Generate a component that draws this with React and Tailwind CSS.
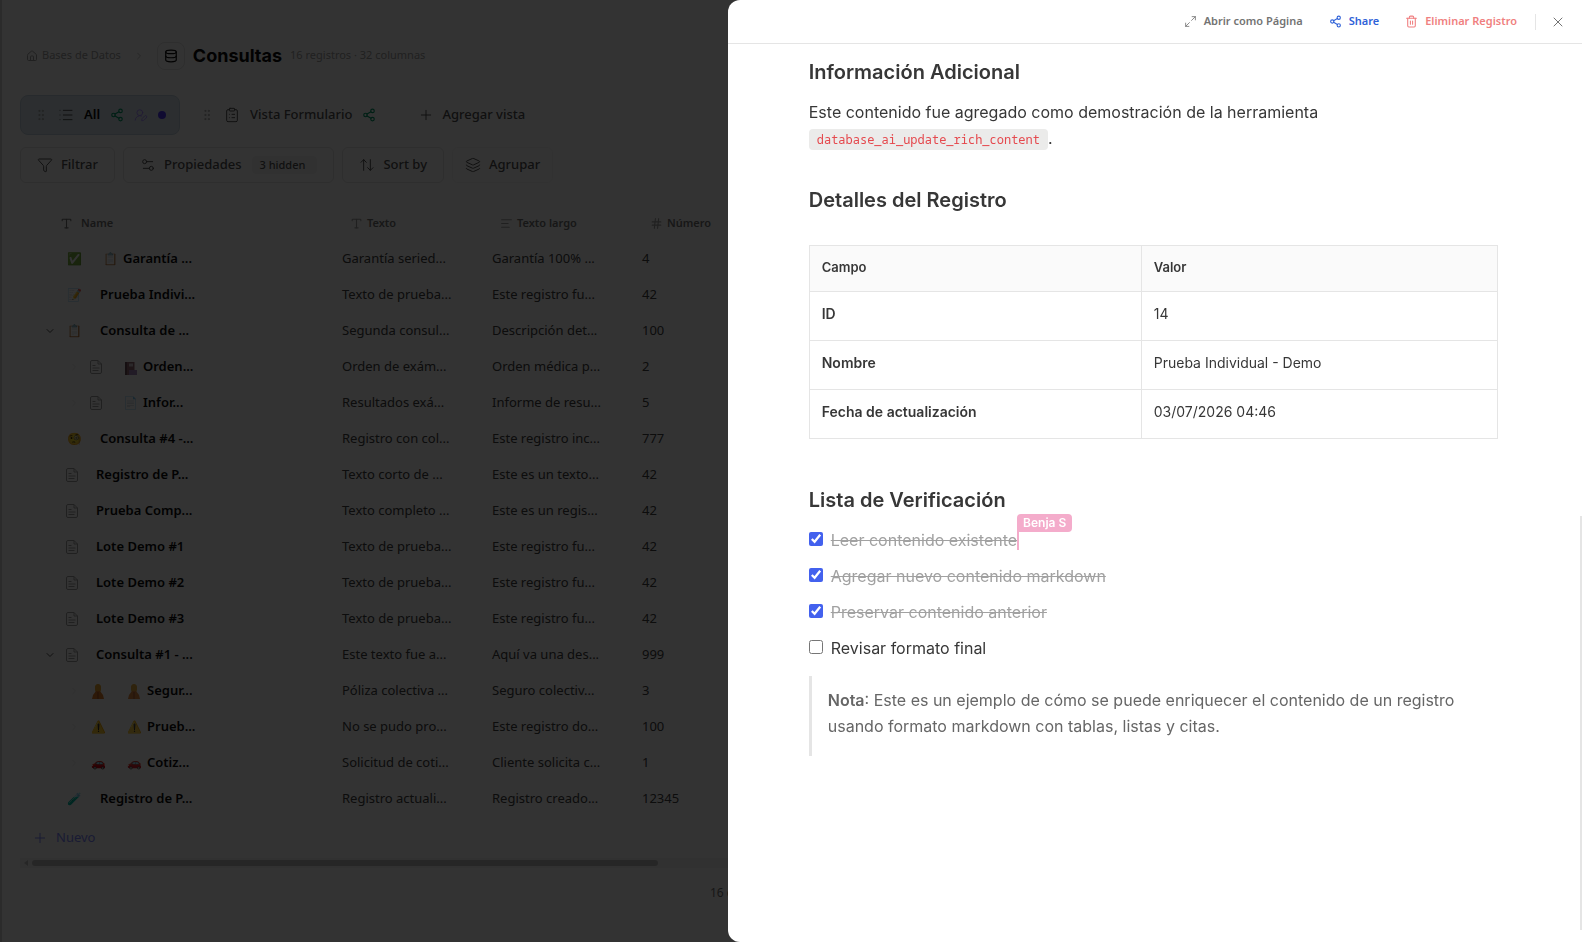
import {
  ArrowUpDown,
  ChevronDown,
  ChevronRight,
  ClipboardList,
  Database,
  Filter,
  GripVertical,
  Hash,
  House,
  Layers,
  List,
  Maximize2,
  Plus,
  Settings2,
  Share2,
  Text,
  Trash2,
  Type,
  UserRoundPen,
  X,
} from "lucide-react";

const rows = [
  { icon: "✅", emoji: "📋", name: "Garantía ...", text: "Garantía seried...", long: "Garantía 100% ...", num: "4" },
  { icon: "📝", name: "Prueba Indivi...", text: "Texto de prueba...", long: "Este registro fu...", num: "42" },
  { icon: "📋", open: true, name: "Consulta de ...", text: "Segunda consul...", long: "Descripción det...", num: "100" },
  { nested: true, emoji: <NotebookIcon />, name: "Orden...", text: "Orden de exám...", long: "Orden médica p...", num: "2" },
  { nested: true, emoji: "📄", name: "Infor...", text: "Resultados exá...", long: "Informe de resu...", num: "5" },
  { icon: "🧐", name: "Consulta #4 -...", text: "Registro con col...", long: "Este registro inc...", num: "777" },
  { name: "Registro de P...", text: "Texto corto de ...", long: "Este es un texto...", num: "42" },
  { name: "Prueba Comp...", text: "Texto completo ...", long: "Este es un regis...", num: "42" },
  { name: "Lote Demo #1", text: "Texto de prueba...", long: "Este registro fu...", num: "42" },
  { name: "Lote Demo #2", text: "Texto de prueba...", long: "Este registro fu...", num: "42" },
  { name: "Lote Demo #3", text: "Texto de prueba...", long: "Este registro fu...", num: "42" },
  { open: true, name: "Consulta #1 - ...", text: "Este texto fue a...", long: "Aquí va una des...", num: "999" },
  { nested: true, icon: <WorkerIcon />, emoji: <WorkerIcon />, name: "Segur...", text: "Póliza colectiva ...", long: "Seguro colectiv...", num: "3" },
  { nested: true, icon: "⚠️", emoji: "⚠️", name: "Prueb...", text: "No se pudo pro...", long: "Este registro do...", num: "100" },
  { nested: true, icon: "🚗", emoji: "🚗", name: "Cotiz...", text: "Solicitud de coti...", long: "Cliente solicita c...", num: "1" },
  { icon: "🧪", name: "Registro de P...", text: "Registro actuali...", long: "Registro creado...", num: "12345" },
];

const details = [
  ["ID", "14"],
  ["Nombre", "Prueba Individual - Demo"],
  ["Fecha de actualización", "03/07/2026 04:46"],
];

const tasks = [
  { id: "leer", label: "Leer contenido existente", done: true, cursor: "Benja S" },
  { id: "agregar", label: "Agregar nuevo contenido markdown", done: true },
  { id: "preservar", label: "Preservar contenido anterior", done: true },
  { id: "revisar", label: "Revisar formato final", done: false },
];

function DocIcon() {
  return (
    <svg
      width="12"
      height="14"
      viewBox="0 0 12 14"
      fill="none"
      stroke="currentColor"
      className="mr-[18px] shrink-0 text-neutral-400"
    >
      <path d="M2 .5h6L11.500 4v8a1.500 1.500 0 0 1-1.500 1.500H2A1.500 1.500 0 0 1 .5 12V2A1.500 1.500 0 0 1 2 .5Z" />
      <path d="M8 .5V4h3.500M2.500 5.500h3M2.500 8h7M2.500 10.500h6" />
    </svg>
  );
}

function NotebookIcon() {
  return (
    <svg width="13" height="14" viewBox="0 0 13 14" className="inline-block">
      <path d="M1 1h9.500v13H1z" fill="#8c5a66" />
      <path d="M1 1h2v13H1z" fill="#5b3b46" />
      <path d="M5 2.500h4v3H5z" fill="#d3c4cc" />
      <path d="M5 9h8v5H5z" fill="#9a7bb5" />
    </svg>
  );
}

function WorkerIcon() {
  return (
    <svg width="12" height="15" viewBox="0 0 12 15" className="inline-block">
      <path d="M6 0a3 3 0 0 1 3 3.500v2A3 3 0 0 1 3 5.500v-2A3 3 0 0 1 6 0Z" fill="#e8a72e" />
      <path d="M4 7h4l3 4 1 4H0l1-4z" fill="#e07f2c" />
      <path d="M5.200 8h1.600v7H5.200z" fill="#b9622a" />
    </svg>
  );
}

function NameCell({ row }) {
  return (
    <div className={`flex items-center ${row.nested ? "pl-12" : "pl-6"}`}>
      <span className="mr-2.5 w-3 shrink-0 text-neutral-600">
        {row.open && <ChevronDown size={12} />}
        {row.nested && <ChevronRight size={12} className="opacity-10" />}
      </span>

      {row.icon ? (
        <span className="mr-[18px] w-4 shrink-0 text-center text-xs">
          {row.icon}
        </span>
      ) : (
        <DocIcon />
      )}

      {row.emoji && (
        <span className="mr-[3px] w-5 shrink-0 text-center text-xs opacity-90">
          {row.emoji}
        </span>
      )}
      <span className="whitespace-nowrap font-semibold text-neutral-950">{row.name}</span>
    </div>
  );
}

function DatabasePage() {
  return (
    <main className="min-h-screen border-l-2 border-neutral-300 bg-white pl-[18px] font-['Noto_Sans',sans-serif] text-[13px]">
      <header className="flex h-[95px] items-center pt-4 text-[11px] text-neutral-400">
        <a href="#bases" className="ml-1.5 flex items-center gap-1">
          <House size={12} />
          Bases de Datos
        </a>
        <ChevronRight size={12} className="mr-3 ml-3 opacity-60" />
        <span className="flex size-7 items-center justify-center rounded-lg border border-neutral-200">
          <Database size={14} className="text-neutral-950" />
        </span>
        <h1 className="ml-2 font-['Inter',sans-serif] text-lg font-bold text-neutral-950">
          Consultas
        </h1>
        <span className="ml-2">16 registros · 32 columnas</span>
      </header>

      <nav className="flex h-10 items-center font-medium text-neutral-600">
        <button className="flex h-10 items-center gap-2.5 rounded-lg border border-[#c4d3df] bg-[#d9e6ef] px-[13px] font-semibold text-neutral-950">
          <GripVertical size={14} strokeWidth={1.5} className="text-neutral-400" />
          <List size={16} strokeWidth={1.5} className="text-neutral-600" />
          All
          <Share2 size={14} className="text-emerald-600" />
          <UserRoundPen size={14} strokeWidth={1.5} className="text-violet-400" />
          <span className="size-2 rounded-full bg-indigo-600" />
        </button>
        <button className="ml-5 flex h-10 items-center gap-2.5">
          <GripVertical size={14} strokeWidth={1.5} className="text-neutral-400" />
          <ClipboardList size={16} strokeWidth={1.5} />
          Vista Formulario
          <Share2 size={14} className="text-emerald-600" />
        </button>
        <button className="ml-[42px] flex h-10 items-center gap-2">
          <Plus size={16} strokeWidth={1.5} />
          Agregar vista
        </button>
      </nav>

      <div className="mt-3 flex gap-2 font-medium text-neutral-600">
        <button className="flex h-9 items-center gap-2 rounded-md border border-neutral-200 px-4">
          <Filter size={16} strokeWidth={1.5} />
          Filtrar
        </button>
        <button className="flex h-9 items-center gap-2 rounded-md border border-neutral-200 px-4">
          <Settings2 size={16} strokeWidth={1.5} />
          Propiedades
          <span className="ml-0.5 rounded bg-neutral-100 pr-3 pl-2 text-[11px] leading-[18px]">
            3 hidden
          </span>
        </button>
        <button className="flex h-9 items-center gap-2 rounded-md border border-neutral-200 px-4">
          <ArrowUpDown size={16} strokeWidth={1.5} />
          Sort by
        </button>
        <button className="flex h-9 items-center gap-2 rounded-md border border-neutral-100 px-3">
          <Layers size={16} strokeWidth={1.5} />
          Agrupar
        </button>
      </div>

      <table className="mt-[22px] w-[760px] table-fixed text-left text-neutral-700">
        <thead>
          <tr className="h-9 text-[11px] text-neutral-500">
            <th className="w-[310px] font-semibold">
              <span className="flex items-center gap-2 pl-10">
                <Type size={13} /> Name
              </span>
            </th>
            <th className="w-[150px] font-semibold">
              <span className="flex items-center gap-1 pl-5">
                <Type size={13} className="text-neutral-400" /> Texto
              </span>
            </th>
            <th className="w-[150px] font-semibold">
              <span className="flex items-center gap-1 pl-5">
                <Text size={13} className="text-neutral-400" /> Texto largo
              </span>
            </th>
            <th className="w-[150px] font-semibold">
              <span className="flex items-center gap-1 pl-5">
                <Hash size={13} className="text-neutral-400" /> Número
              </span>
            </th>
          </tr>
        </thead>
        <tbody>
          {rows.map((row, i) => (
            <tr key={i} className="h-9">
              <td>
                <NameCell row={row} />
              </td>
              <td className="whitespace-nowrap pl-3">{row.text}</td>
              <td className="whitespace-nowrap pl-3">{row.long}</td>
              <td className="pl-3">{row.num}</td>
            </tr>
          ))}
        </tbody>
      </table>

      <button className="ml-3 flex h-[41px] items-center gap-2 text-indigo-400">
        <Plus size={16} strokeWidth={1.5} />
        Nuevo
      </button>

      <div className="flex h-2.5 items-center gap-1 bg-neutral-100">
        <span className="ml-1 border-y-3 border-r-4 border-y-transparent border-r-[#bebebe]" />
        <span className="h-1.5 w-[626px] rounded-full bg-[#bebebe]" />
      </div>

      <p className="mt-[17px] ml-[690px] text-xs text-neutral-500">16 de 16</p>
    </main>
  );
}

function RecordDrawer() {
  return (
    <aside className="fixed inset-y-0 right-0 flex w-[54%] flex-col overflow-hidden rounded-l-xl bg-white">
      <header className="flex h-11 shrink-0 items-center justify-end border-b border-neutral-200 pr-4 font-['Noto_Sans',sans-serif] text-[11px] font-semibold text-neutral-500">
        <button className="flex items-center gap-[7px]">
          <Maximize2 size={13} strokeWidth={1.5} />
          Abrir como Página
        </button>
        <button className="ml-[26px] flex items-center gap-[7px] text-[#2f62d8]">
          <Share2 size={13} />
          Share
        </button>
        <button className="ml-[26px] flex items-center gap-[7px] text-[#f07f80]">
          <Trash2 size={13} />
          Eliminar Registro
        </button>
        <span className="mr-3.5 ml-[18px] h-4 w-px bg-neutral-200" />
        <button aria-label="Cerrar">
          <X size={16} strokeWidth={1.5} />
        </button>
      </header>

      <article className="pr-21 pl-[81px] font-['Inter',sans-serif] text-base text-[#373737]">
        <h2 className="mt-3.5 text-xl leading-7 font-semibold">Información Adicional</h2>
        <p className="mt-[13px] leading-[26px]">
          Este contenido fue agregado como demostración de la herramienta
          <br />
          <code className="rounded bg-[#ebebea] px-2 py-0.5 font-['Noto_Sans_Mono','DejaVu_Sans_Mono',monospace] text-xs text-[#e5484d]">
            database_ai_update_rich_content
          </code>
          .
        </p>

        <h2 className="mt-[35px] text-xl leading-7 font-semibold">Detalles del Registro</h2>
        <table className="mt-[31px] w-full table-fixed border-collapse text-left text-sm">
          <thead>
            <tr className="h-[46px] bg-neutral-50 align-top text-[13px]">
              <th className="w-[332px] border border-neutral-200 px-3 pt-3 font-semibold">Campo</th>
              <th className="border border-neutral-200 px-3 pt-3 font-semibold">Valor</th>
            </tr>
          </thead>
          <tbody>
            {details.map(([field, value]) => (
              <tr key={field} className="h-[49px] align-top">
                <th className="border border-neutral-200 px-3 pt-3 font-semibold">{field}</th>
                <td className="border border-neutral-200 px-3 pt-3">{value}</td>
              </tr>
            ))}
          </tbody>
        </table>

        <h2 className="mt-[47px] text-xl leading-7 font-semibold">Lista de Verificación</h2>
        <ul className="mt-2">
          {tasks.map((task) => (
            <li key={task.id} className="flex h-9 items-center gap-2">
              <input
                id={task.id}
                type="checkbox"
                defaultChecked={task.done}
                className="mb-0.5 size-3.5 accent-[#4361ee]"
              />
              <label
                htmlFor={task.id}
                className={task.done ? "text-neutral-400 line-through" : ""}
              >
                {task.label}
              </label>
              {task.cursor && (
                <span className="relative -ml-2 h-5 border-l-2 border-[#f4accb]">
                  <span className="absolute -top-4 -left-0.5 rounded rounded-bl-none bg-[#f4accb] px-1.5 text-xs leading-[18px] font-semibold whitespace-nowrap text-white">
                    {task.cursor}
                  </span>
                </span>
              )}
            </li>
          ))}
        </ul>

        <blockquote className="mt-2.5 border-l-3 border-neutral-200 pt-[11px] pr-4 pb-[17px] pl-4 leading-[26px] text-[#666]">
          <strong className="font-semibold">Nota</strong>: Este es un ejemplo de cómo se puede
          enriquecer el contenido de un registro usando formato markdown con tablas, listas y citas.
        </blockquote>
      </article>

      {/* scroll thumb */}
      <div className="absolute right-0 bottom-3 h-[44%] w-0.5 bg-neutral-200" />
    </aside>
  );
}

function App() {
  return (
    <div className="h-screen overflow-hidden">
      <DatabasePage />
      <div className="fixed inset-0 bg-black/80" />
      <RecordDrawer />
    </div>
  );
}

export default App;
